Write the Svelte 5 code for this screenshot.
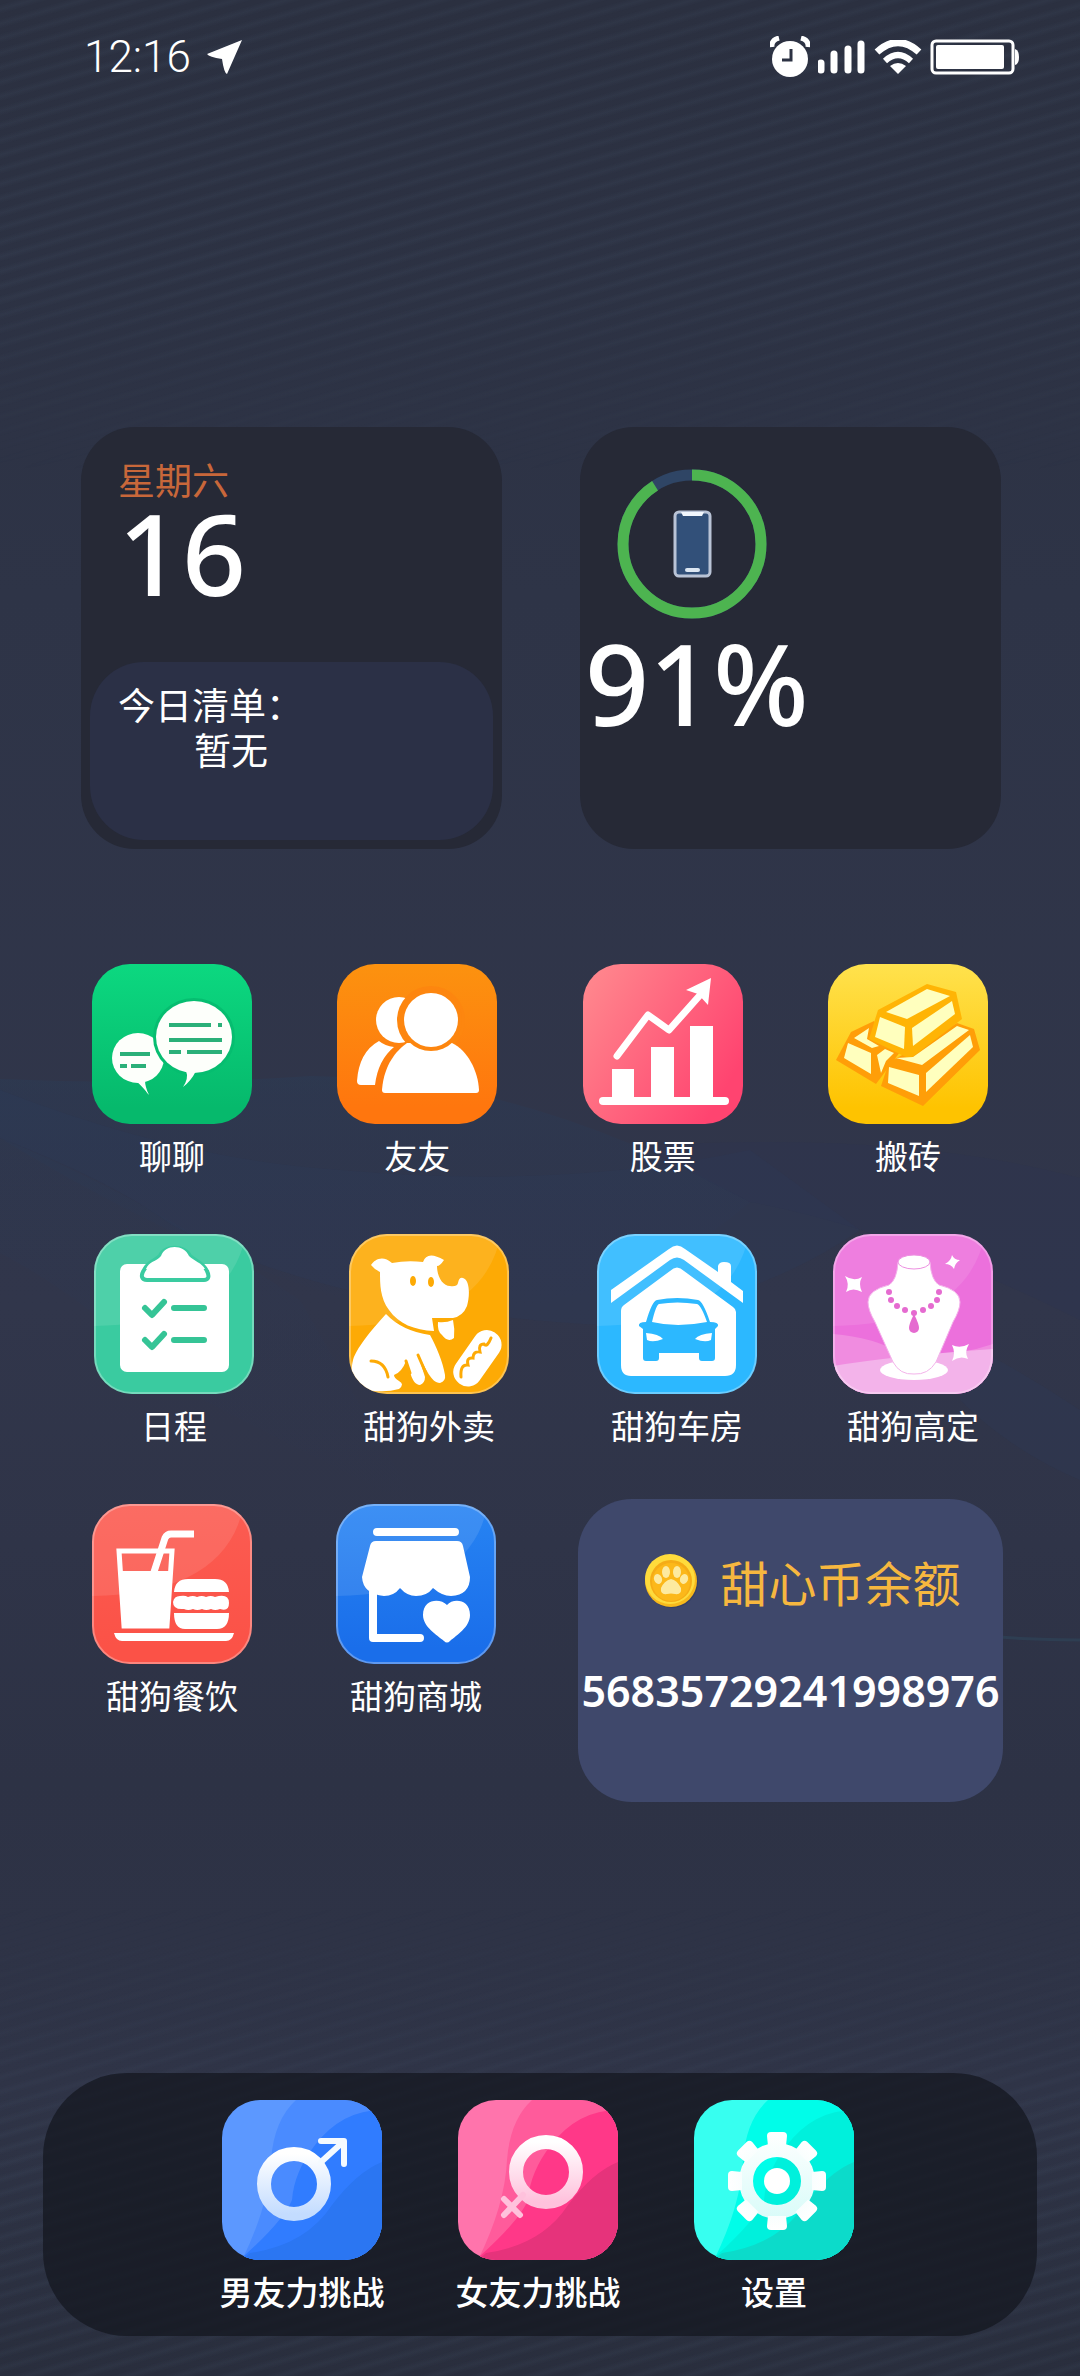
<script lang="ts">
    interface App {
        id: string;
        label: string;
        from: string;
        to: string;
        shine?: boolean;
    }

    const firstRow: App[] = [
        { id: "chat", label: "聊聊", from: "#0cd880", to: "#06b96c" },
        { id: "friends", label: "友友", from: "#fc920f", to: "#ff760e" },
        { id: "stocks", label: "股票", from: "#ff8b8f", to: "#ff4470" },
        { id: "gold", label: "搬砖", from: "#ffe24d", to: "#fec300" },
    ]

    const secondRow: App[] = [
        { id: "todo", label: "日程", from: "#3acba0", to: "#3acba0", shine: true },
        { id: "dog", label: "甜狗外卖", from: "#fdaa05", to: "#fdaa05", shine: true },
        { id: "house", label: "甜狗车房", from: "#2cb8ff", to: "#2cb8ff", shine: true },
        { id: "jewel", label: "甜狗高定", from: "#ec70dc", to: "#ec70dc", shine: true },
    ]

    const thirdRow: App[] = [
        { id: "food", label: "甜狗餐饮", from: "#fb5c52", to: "#fb5247", shine: true },
        { id: "shop", label: "甜狗商城", from: "#2784f3", to: "#1a6eea", shine: true },
    ]

    const dock = [
        { id: "male", label: "男友力挑战", colors: ["#5c98ff", "#4a8bff", "#307cff", "#2b76f2"] },
        { id: "female", label: "女友力挑战", colors: ["#ff74ac", "#ff5b9b", "#ff3888", "#e6337b"] },
        { id: "settings", label: "设置", colors: ["#37fff0", "#00fde9", "#00f0dc", "#0cdbca"] },
    ]

    const battery = 91
    const balance = "56835729241998976"
    const beads = [[56, 58], [58, 66], [64, 72], [72, 76], [81, 79], [90, 76], [98, 72], [104, 66], [106, 58]]
</script>

{#snippet glyph(id: string)}
    {#if id === "chat"}
        <g fill="#fdfffb">
            <ellipse cx="46" cy="94" rx="26" ry="25" />
            <path d="M44 117Q53 123 57 131Q51 125 53 116Z" />
            <path d="M44 117Q50 122 57 131Q53 123 53 116Z" />
        </g>
        <ellipse cx="102" cy="73" rx="41" ry="39" fill="#06bd70" />
        <g fill="#fdfffb">
            <ellipse cx="102" cy="73" rx="38" ry="36" />
            <path d="M94 107Q97 114 91 123Q99 117 104 107Z" />
        </g>
        <path d="M77 61H119M126 61H130M77 76H130M77 88H89M95 88H130M28 90H58M28 102H35M39 102H54" stroke="#2bb079" stroke-width="4" fill="none" />
    {:else if id === "friends"}
        <g fill="#fff">
            <circle cx="62" cy="56" r="23" />
            <path d="M42 77Q48 82 57 83Q41 96 38 121H24Q20 121 20 117Q22 88 42 77Z" />
        </g>
        <circle cx="94" cy="56" r="34" fill="#fd860f" />
        <path d="M45 126C47 100 60 86 70 79H115C130 86 141 106 142 126Q142 129 139 129H48Q45 129 45 126Z" fill="#fff" />
        <circle cx="94" cy="56" r="31" fill="#fd860f" />
        <circle cx="94" cy="56" r="27" fill="#fff" />
    {:else if id === "stocks"}
        <path d="M29 105H51V136H29ZM68 83H91V136H68ZM107 62H130V136H107Z" fill="#fff" />
        <path d="M20 137H142" stroke="#fff" stroke-width="8" stroke-linecap="round" />
        <path d="M34 92L65 51L86 66L118 30" stroke="#fff" stroke-width="7" fill="none" stroke-linecap="round" stroke-linejoin="round" />
        <path d="M128 14L103 26L115 30L125 41Z" fill="#fff" />
    {:else if id === "gold"}
        <g fill="#ff9e08">
            <path d="M46 57L23 68L8 96L48 120L72 88Z" />
            <path d="M129 59L146 65L152 86L95 142L53 122L61 98L80 88Z" />
        </g>
        <path d="M99 20L128 28L134 55L82 95L41 75L50 46Z" fill="#ffb405" />
        <g fill="#ffffbe">
            <path d="M99 25L122 32L79 55L58 48Z" />
            <path d="M52 53L77 63L76 85L47 73Z" />
            <path d="M124 37L127 50L85 82L84 64Z" />
            <path d="M26 74L41 64L39 75L51 82L44 84Z" />
            <path d="M20 79L43 89L43 110L16 94Z" />
            <path d="M49 91L57 85L66 89L58 97L53 109Z" />
            <path d="M129 62L141 66L94 101L68 94L85 93Z" />
            <path d="M61 103L91 111V132L60 119Z" />
            <path d="M142 71L145 83L98 128V109Z" />
        </g>
    {:else if id === "todo"}
        <rect x="26" y="30" width="109" height="108" rx="7" fill="#fff" />
        <path d="M50 36C54 27 61 27 66 22C70 11 91 11 96 22C101 27 109 28 113 37C116 43 114 46 110 46H53C48 46 46 42 50 36Z" fill="#fff" stroke="#3acba0" stroke-width="4" />
        <path d="M52 35C55 27 62 28 67 22C71 10 90 10 95 22C100 27 108 29 111 35Z" fill="#fff" />
        <path d="M51 74L58 81L70 68M80 74H110M51 106L58 113L70 100M80 106H110" stroke="#35c496" stroke-width="6" fill="none" stroke-linecap="round" stroke-linejoin="round" />
    {:else if id === "dog"}
        <g fill="#fff">
            <path d="M22 31C26 25 34 21 43 29Q58 26 74 28Q78 16 95 26Q91 32 88 32C88 43 94 52 101 52Q108 53 109 49Q110 43 114 44C121 46 121 62 118 72Q114 82 104 84L83 84L85 97C65 96 50 90 40 76C31 64 31 50 31 38Q26 36 22 31Z" />
            <path d="M89 88Q97 89 104 86Q106 95 105 104Q99 109 93 101Q88 97 89 88Z" />
            <path d="M37 80C28 90 8 112 4 126C0 142 6 154 18 156Q36 159 50 155Q56 150 50 147Q45 144 45 141Q53 138 57 127C62 137 62 150 71 151Q76 149 76 143L69 121C77 134 82 149 91 149Q97 147 96 141C94 128 87 112 81 101Q53 97 37 80Z" />
            <rect x="114" y="93" width="29" height="62" rx="14" transform="rotate(35 128 124)" />
        </g>
        <ellipse cx="64" cy="47" rx="3" ry="5" fill="#fdaa05" />
        <ellipse cx="82" cy="48" rx="3" ry="5" fill="#fdaa05" />
        <path d="M22 127Q36 127 39 143M57 127L61 139M69 121L76 137M142 104Q138 114 135 110Q129 110 131 118Q124 117 124 124Q117 123 119 131Q111 130 112 143" fill="none" stroke="#fdaa05" stroke-width="3" stroke-linecap="round" />
    {:else if id === "house"}
        <g fill="#fff">
            <path d="M14 56L72 15Q80 8 88 15L121 38V32Q122 28 127 28Q134 28 134 32V48L146 57V69L87 26Q80 21 73 26L14 69Z" />
            <path d="M24 77Q24 73 27 71L73 37Q80 30 87 37L136 73Q139 75 139 78V131Q139 142 128 142H34Q24 142 24 131Z" />
        </g>
        <path d="M60 66Q80 62 101 66Q106 67 113 88Q122 88 121 92L118 95V124Q118 127 115 127H105Q102 127 102 124V119H62V124Q62 127 59 127H49Q46 127 46 124V95L42 92Q41 88 49 88Q55 67 60 66Z" fill="#2cb8ff" />
        <path d="M62 70Q80 67 100 70Q104 71 110 88Q80 94 55 88Q59 71 62 70ZM49 99Q62 100 66 105Q56 109 50 106ZM115 99Q102 100 98 105Q108 109 114 106Z" fill="#fff" />
    {:else if id === "jewel"}
        <path d="M0 100Q40 103 70 120Q120 124 160 110V160H0Z" fill="#f08ce0" />
        <path d="M0 132Q60 122 160 115V160H0Z" fill="#f3b3ea" />
        <ellipse cx="81" cy="136" rx="34" ry="10" fill="#fff" />
        <path d="M65 28H97Q98 46 106 51Q127 56 127 68Q127 76 120 88L103 128Q95 141 81 140Q67 141 60 128L42 88Q35 76 35 68Q35 56 56 51Q64 46 65 28Z" fill="#fff" stroke="#f3b3ea" stroke-width="1" />
        <ellipse cx="81" cy="28" rx="16" ry="7" fill="#fff" stroke="#ec8fe0" stroke-width="1" />
        {#each beads as [cx, cy]}
            <circle {cx} {cy} r="3" fill="#e56bd0" />
        {/each}
        <path d="M81 80Q86 90 86 94A5 5 0 0 1 76 94Q76 90 81 80Z" fill="#e56bd0" />
        <g fill="#fff">
            <path d="M12 42Q21 48 29 43Q25 50 29 58Q20 53 13 58Q17 50 12 42Z" />
            <path d="M119 21Q121 26 127 26Q122 29 121 35Q118 30 112 30Q118 27 119 21Z" />
            <path d="M119 111Q127 115 136 110Q131 118 135 125Q127 121 119 127Q123 119 119 111Z" />
        </g>
    {:else if id === "food"}
        <path d="M27 47H80L75 122H32Z" fill="none" stroke="#fff" stroke-width="5" />
        <path d="M30 67H78L75 122H33Z" fill="#fff" />
        <path d="M62 68L73 34Q75 30 79 30H102" fill="none" stroke="#fff" stroke-width="7" />
        <g fill="#fff">
            <path d="M82 88Q83 75 96 75H123Q136 75 137 88ZM82 109H137Q137 125 125 125H93Q82 125 82 109ZM22 129H142Q140 137 134 137H30Q24 137 22 129Z" />
            <path d="M88 92Q93 91 96 93Q101 91 105 93Q110 91 114 93Q119 91 123 93Q137 89 137 99Q137 108 128 105Q123 107 119 105Q114 107 110 105Q105 107 101 105Q96 107 92 105Q81 106 81 98Q82 92 88 92Z" />
        </g>
    {:else if id === "shop"}
        <path d="M41 28H119M37 80V134H84" fill="none" stroke="#fff" stroke-width="8" stroke-linecap="round" stroke-linejoin="round" />
        <path d="M40 37H121Q126 37 127 42L134 73Q134 91 115 92Q106 92 97 84Q91 92 80 92Q71 92 64 84Q58 92 48 92Q27 90 26 73L34 42Q35 37 40 37Z" fill="#fff" />
        <path d="M111 101C117 94 134 95 134 111C134 123 121 131 114 137Q111 140 108 137C101 131 87 123 87 111C87 95 104 94 111 101Z" fill="#fff" />
    {:else if id === "male"}
        <circle cx="72" cy="84" r="30" fill="none" stroke="url(#ring-male)" stroke-width="14" />
        <path d="M99 62L121 42M99 41H122V64" fill="none" stroke="#f4faff" stroke-width="6" stroke-linecap="round" stroke-linejoin="round" />
    {:else if id === "female"}
        <circle cx="88" cy="72" r="30" fill="none" stroke="url(#ring-female)" stroke-width="14" />
        <path d="M65 95L46 115M46 99L62 115" fill="none" stroke="#ffc1dc" stroke-width="6" stroke-linecap="round" />
    {:else}
        <g fill="url(#gear)">
            <path fill-rule="evenodd" d="M83 43A38 38 0 1 0 83 119A38 38 0 1 0 83 43ZM83 57A24 24 0 1 1 83 105A24 24 0 1 1 83 57Z" />
            {#each [0, 45, 90, 135, 180, 225, 270, 315] as angle}
                <path d="M74 46L73 36Q73 32 77 32H89Q93 32 93 36L92 46Z" transform="rotate({angle} 83 81)" />
            {/each}
        </g>
        <circle cx="83" cy="81" r="13" fill="#fff" />
    {/if}
{/snippet}

{#snippet appButton(app: App)}
    <button class="app" type="button">
        <svg class="tile" viewBox="0 0 160 160" aria-hidden="true">
            <defs>
                <linearGradient id="bg-{app.id}" x1="0" y1="0" x2={app.id === "stocks" ? 1 : 0} y2={app.id === "stocks" ? 0.6 : 0.9}>
                    <stop offset="0" stop-color={app.from} />
                    <stop offset="1" stop-color={app.to} />
                </linearGradient>
                <clipPath id="clip-{app.id}"><rect width="160" height="160" rx="38" /></clipPath>
            </defs>
            <g clip-path="url(#clip-{app.id})">
                <rect width="160" height="160" fill="url(#bg-{app.id})" />
                {#if app.shine}
                    <path d="M0 0H152Q135 90 0 92Z" fill="#fff" opacity="0.1" />
                {/if}
                {@render glyph(app.id)}
            </g>
            {#if app.shine}
                <rect x="1" y="1" width="158" height="158" rx="37" fill="none" stroke="#fff" stroke-opacity="0.3" stroke-width="2" />
            {/if}
        </svg>
        <span>{app.label}</span>
    </button>
{/snippet}

<div class="screen">
    <div class="stripes"></div>
    <svg class="waves" viewBox="0 0 1080 2376" preserveAspectRatio="none" aria-hidden="true">
        <defs>
            <linearGradient id="wave" x1="0" y1="0" x2="0" y2="1">
                <stop offset="0" stop-color="#2b3b55" stop-opacity="0.5" />
                <stop offset="1" stop-color="#2b3553" stop-opacity="0" />
            </linearGradient>
        </defs>
        <path d="M0 1079Q160 1086 310 1076Q420 1078 496 1099Q620 1130 750 1202Q640 1300 440 1320Q250 1290 0 1138Z" fill="url(#wave)" />
        <path d="M0 1138Q110 1180 172 1225Q330 1310 600 1325Q760 1300 860 1230L750 1150Q560 1190 340 1170Q180 1160 0 1090Z" fill="#2b3a5c" opacity="0.25" />
        <path d="M0 1253Q90 1300 172 1384Q280 1440 420 1510L300 1300Q150 1200 0 1138Z" fill="url(#wave)" opacity="0.6" />
        <path d="M640 1146Q900 1130 1080 1178V1320Q900 1230 750 1202Z" fill="#2b3553" opacity="0.25" />
        <path d="M960 1340Q1020 1370 1080 1410V1480Q1010 1450 960 1400Z" fill="#2b3a5c" opacity="0.25" />
        <path d="M860 1622Q980 1640 1080 1640" fill="none" stroke="#2e3e52" stroke-width="3" />
    </svg>

    <header class="status">
        <div class="time">
            <time>12:16</time>
            <svg width="36" height="36" viewBox="0 0 36 36" aria-hidden="true"><path d="M35 1L0 15Q2 18 15 20Q17 34 20 35Z" fill="#fff" /></svg>
        </div>
        <div class="indicators">
            <svg width="40" height="42" viewBox="0 0 40 42" aria-hidden="true">
                <circle cx="20" cy="23" r="18" fill="#fff" />
                <path d="M2 11Q1 4 9 2M31 2Q39 4 38 11" stroke="#fff" stroke-width="5" fill="none" />
                <path d="M21 13V24H12" stroke="#2c3243" stroke-width="3" fill="none" />
            </svg>
            <svg width="48" height="34" viewBox="0 0 48 34" aria-hidden="true">
                <path d="M3 23V30M16 14V30M30 9V30M43 4V30" stroke="#fff" stroke-width="7" stroke-linecap="round" />
            </svg>
            <svg width="48" height="34" viewBox="0 0 48 34" aria-hidden="true">
                <path d="M3 12Q24 -7 45 12" stroke="#fff" stroke-width="7" fill="none" />
                <path d="M11 21Q24 9 37 21" stroke="#fff" stroke-width="6" fill="none" />
                <path d="M24 34L16 26Q24 20 32 26Z" fill="#fff" />
            </svg>
            <svg width="90" height="36" viewBox="0 0 90 36" aria-hidden="true">
                <rect x="2" y="2" width="81" height="32" rx="4" fill="none" stroke="#fff" stroke-width="3" />
                <rect x="6" y="6" width="68" height="24" rx="2" fill="#fff" />
                <path d="M85 10Q89 11 89 18T85 26Z" fill="#fff" />
            </svg>
        </div>
    </header>

    <section class="widgets">
        <article class="widget">
            <div class="date">
                <p class="weekday">星期六</p>
                <p class="big">16</p>
            </div>
            <div class="todo">
                <p>今日清单：</p>
                <p class="empty">暂无</p>
            </div>
        </article>
        <article class="widget">
            <svg class="ring" viewBox="0 0 150 150" role="img" aria-label="电量">
                <circle cx="75" cy="75" r="69" fill="none" stroke="#2f4565" stroke-width="11" />
                <circle cx="75" cy="75" r="69" fill="none" stroke="#4db450" stroke-width="11" pathLength="100" stroke-dasharray="{battery} 100" transform="rotate(-90 75 75)" />
                <rect x="58" y="43" width="35" height="64" rx="4" fill="#325079" stroke="#b9c3d6" stroke-width="3" />
                <path d="M64 43H87L85 47H66Z" fill="#f1f6fc" />
                <path d="M70 101H81" stroke="#dce6f2" stroke-width="4" stroke-linecap="round" />
            </svg>
            <p class="big percent">{battery}%</p>
        </article>
    </section>

    <main>
        <div class="row">
            {#each firstRow as app}{@render appButton(app)}{/each}
        </div>
        <div class="row staggered">
            {#each secondRow as app}{@render appButton(app)}{/each}
        </div>
        <div class="last">
            <div class="pair">
                {#each thirdRow as app}{@render appButton(app)}{/each}
            </div>
            <section class="balance">
                <h2>
                    <svg width="54" height="54" viewBox="0 0 54 54" aria-hidden="true">
                        <circle cx="28" cy="28" r="26" fill="#303a5e" opacity="0.6" />
                        <circle cx="27" cy="27" r="26" fill="#f7b91c" />
                        <circle cx="26" cy="25" r="25" fill="#fedb3c" />
                        <circle cx="27" cy="27" r="21" fill="#f5ac16" />
                        <circle cx="27" cy="28" r="19" fill="#fcb81a" />
                        <g fill="#fdeaa0">
                            <ellipse cx="14" cy="25" rx="4" ry="5" transform="rotate(-20 14 25)" />
                            <ellipse cx="22" cy="18" rx="4" ry="6" />
                            <ellipse cx="33" cy="18" rx="4" ry="6" />
                            <ellipse cx="40" cy="25" rx="4" ry="5" transform="rotate(20 40 25)" />
                            <path d="M27 25Q33 26 37 34Q38 41 31 40Q27 39 23 40Q16 41 17 34Q20 27 27 25Z" />
                        </g>
                    </svg>
                    甜心币余额
                </h2>
                <p>{balance}</p>
            </section>
        </div>
    </main>

    <nav class="dock">
        {#each dock as item}
            <button class="app" type="button">
                <svg class="tile" viewBox="0 0 160 160" aria-hidden="true">
                    <defs>
                        <linearGradient id="ring-male" x1="0" y1="0" x2="0" y2="1">
                            <stop offset="0" stop-color="#fff" />
                            <stop offset="1" stop-color="#c3dcff" />
                        </linearGradient>
                        <linearGradient id="ring-female" x1="0" y1="0" x2="0" y2="1">
                            <stop offset="0" stop-color="#fff" />
                            <stop offset="1" stop-color="#ffc1dc" />
                        </linearGradient>
                        <linearGradient id="gear" gradientUnits="userSpaceOnUse" x1="0" y1="32" x2="0" y2="130">
                            <stop offset="0" stop-color="#fff" />
                            <stop offset="1" stop-color="#d4fbf8" />
                        </linearGradient>
                        <clipPath id="clip-dock"><rect width="160" height="160" rx="38" /></clipPath>
                    </defs>
                    <g clip-path="url(#clip-dock)">
                        <rect width="160" height="160" fill={item.colors[0]} />
                        <path d="M74 0Q52 20 49 60Q47 105 20 160H160V0Z" fill={item.colors[1]} />
                        <path d="M160 10Q120 10 93 45Q72 72 70 100Q62 120 22 156L20 160H160Z" fill={item.colors[2]} />
                        <path d="M160 62Q135 72 110 105Q84 145 28 153L20 160H160Z" fill={item.colors[3]} />
                        {@render glyph(item.id)}
                    </g>
                </svg>
                <span>{item.label}</span>
            </button>
        {/each}
    </nav>
</div>

<style>
    :global(body) {
        margin: 0;
        background: #2c3244;
    }

    .screen {
        position: relative;
        box-sizing: border-box;
        min-height: 100vh;
        padding-bottom: 40px;
        display: flex;
        flex-direction: column;
        overflow: hidden;
        color: #fff;
        font-family: "Noto Sans CJK SC", sans-serif;
        background: linear-gradient(#2b3040, #2e3447 25%, #31364b 55%, #2d3245 75%, #2f3447 88%, #292e3d);

        & > :not(.stripes, .waves) {
            position: relative;
        }
    }

    .stripes, .waves {
        position: absolute;
        inset: 0;
        width: 100%;
        height: 100%;
    }

    .stripes {
        background: repeating-linear-gradient(164deg, rgb(120 150 180 / 0) 0 4px, rgb(120 150 180 / 0.06) 9px, rgb(120 150 180 / 0) 14px);
        mask-image: linear-gradient(#000, #000 12%, transparent 20%, transparent 80%, #000 90%);
    }

    p, h2 {
        margin: 0;
        font-weight: 400;
    }

    .status {
        display: flex;
        justify-content: space-between;
        align-items: center;
        height: 114px;
        padding: 0 60px 0 84px;
    }

    .time {
        display: flex;
        align-items: center;
        gap: 16px;
        font-family: Roboto, sans-serif;
        font-size: 44px;
        font-weight: 300;
    }

    .indicators {
        display: flex;
        align-items: center;
        gap: 8px;
    }

    .widgets {
        display: grid;
        grid-template-columns: 1fr 1fr;
        gap: 78px;
        margin-top: 313px;
        padding: 0 79px 0 81px;
    }

    .widget {
        box-sizing: border-box;
        display: flex;
        flex-direction: column;
        min-height: 422px;
        border-radius: 54px;
        background: #262936;
    }

    .date {
        padding: 30px 37px 0;
    }

    .weekday {
        color: #c8673a;
        font-size: 37px;
        line-height: 44px;
    }

    .big {
        font-family: "Noto Sans", sans-serif;
        font-size: 112px;
        font-weight: 500;
        line-height: 104px;
    }

    .todo {
        box-sizing: border-box;
        min-height: 178px;
        margin: auto 9px 9px;
        padding: 20px 28px;
        border-radius: 54px;
        background: #2b3046;
        font-size: 37px;
        line-height: 45px;
    }

    .empty {
        padding-left: 76px;
    }

    .ring {
        width: 150px;
        margin: 42px 0 0 37px;
    }

    .percent {
        margin-top: 12px;
        padding-left: 5px;
    }

    main {
        display: flex;
        flex-direction: column;
        margin-top: 115px;
    }

    .app {
        display: flex;
        flex-direction: column;
        align-items: center;
        gap: 6px;
        width: 160px;
        padding: 0;
        border: 0;
        background: none;
        color: #fff;
        font: inherit;
        font-size: 33px;
        line-height: 50px;
        white-space: nowrap;
        cursor: pointer;
    }

    .tile {
        display: block;
        width: 160px;
        height: 160px;
    }

    .row {
        display: flex;
        justify-content: space-between;
        height: 270px;
        padding: 0 92px;
    }

    .staggered {
        display: grid;
        grid-template-columns: 255fr 248fr 236fr 160px;
        padding: 0 87px 0 94px;
    }

    .last {
        display: flex;
        align-items: center;
        gap: 82px;
        padding: 0 77px 0 92px;
    }

    .pair {
        display: flex;
        gap: 84px;
        align-self: flex-start;
    }

    .balance {
        flex: 1;
        box-sizing: border-box;
        min-height: 303px;
        padding-top: 50px;
        margin-top: -5px;
        border-radius: 54px;
        background: #3f486b;

        & h2 {
            display: flex;
            justify-content: center;
            align-items: center;
            gap: 22px;
            padding-left: 24px;
            color: #f6b73f;
            font-size: 48px;
            line-height: 64px;
        }

        & p {
            margin-top: 46px;
            font-family: "Noto Sans", sans-serif;
            font-size: 43px;
            font-weight: 600;
            line-height: 64px;
            text-align: center;
        }
    }

    .dock {
        display: flex;
        justify-content: center;
        gap: 76px;
        box-sizing: border-box;
        min-height: 263px;
        margin: auto 43px 0;
        padding: 27px 4px 0 0;
        border-radius: 84px;
        background: rgb(20 22 30 / 0.72);

        & .app {
            font-weight: 500;
        }
    }
</style>
